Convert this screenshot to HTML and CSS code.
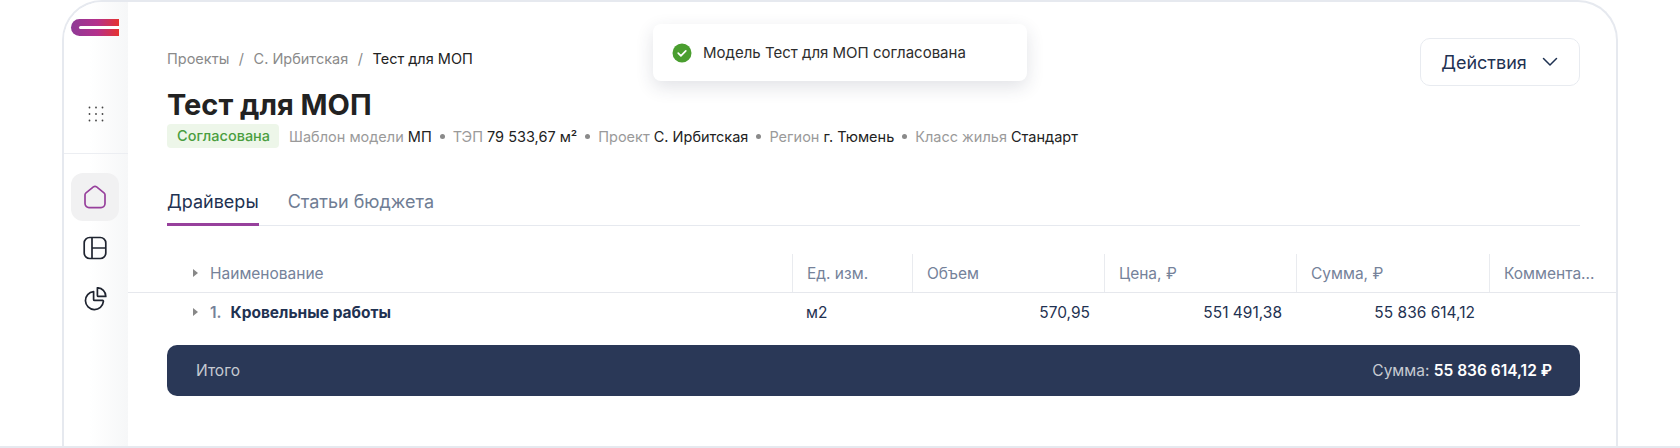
FILE: index.html
```html
<!DOCTYPE html>
<html lang="ru">
<head>
    <meta charset="UTF-8">
    <title>Тест для МОП</title>
    <link rel="stylesheet" href="styles.css">
</head>
<body>
    <div class="frame">
        <!-- Sidebar -->
        <aside class="sidebar">
            <div class="logo"></div>
            <div class="apps-box">
                <svg width="16" height="16" viewBox="0 0 16 16" fill="#444">
                    <circle cx="1.5" cy="1.5" r="0.9"/><circle cx="8" cy="1.5" r="0.9"/><circle cx="14.5" cy="1.5" r="0.9"/>
                    <circle cx="1.5" cy="8" r="0.9"/><circle cx="8" cy="8" r="0.9"/><circle cx="14.5" cy="8" r="0.9"/>
                    <circle cx="1.5" cy="14.5" r="0.9"/><circle cx="8" cy="14.5" r="0.9"/><circle cx="14.5" cy="14.5" r="0.9"/>
                </svg>
            </div>
            <nav class="side-nav">
                <div class="side-item active">
                    <svg width="24" height="24" viewBox="0 0 24 24" fill="none" stroke="#97409c" stroke-width="1.7" stroke-linejoin="round">
                        <path d="M10.4 1.9 A2.6 2.6 0 0 1 13.6 1.9 L21 7.8 A2.6 2.6 0 0 1 22 9.8 V18.6 A4 4 0 0 1 18 22.6 H6 A4 4 0 0 1 2 18.6 V9.8 A2.6 2.6 0 0 1 3 7.8 Z"/>
                    </svg>
                </div>
                <div class="side-item">
                    <svg width="24" height="24" viewBox="0 0 24 24" fill="none" stroke="#1f2430" stroke-width="1.7">
                        <rect x="1.2" y="1.5" width="21.6" height="21" rx="5.5"/>
                        <path d="M9 1.5 V22.5 M9 12 H22.8"/>
                    </svg>
                </div>
                <div class="side-item">
                    <svg width="24" height="24" viewBox="0 2 24 24" fill="none" stroke="#1f2430" stroke-width="1.7" stroke-linejoin="round">
                        <path d="M10.6 6.6 A9 9 0 1 0 20.4 16.4 A0.8 0.8 0 0 0 19.6 15.4 H11.6 A1 1 0 0 1 10.6 14.4 Z"/>
                        <path d="M14.4 2.8 A8.6 8.6 0 0 1 22.8 11.4 H15.4 A1 1 0 0 1 14.4 10.4 Z"/>
                    </svg>
                </div>
            </nav>
        </aside>

        <!-- Main -->
        <main class="main">
            <div class="head">
                <div class="head-top">
                    <div>
                        <div class="breadcrumbs">
                            <span>Проекты</span><span class="sep">/</span><span>С. Ирбитская</span><span class="sep">/</span><span class="current">Тест для МОП</span>
                        </div>
                        <h1>Тест для МОП</h1>
                    </div>
                    <button class="actions-btn">
                        Действия
                        <svg width="18" height="18" viewBox="0 0 18 18" fill="none" stroke="#1f3252" stroke-width="1.5" stroke-linecap="round" stroke-linejoin="round"><path d="M2.5 5.5 L9 12 L15.5 5.5"/></svg>
                    </button>
                </div>
                <div class="meta">
                    <span class="badge">Согласована</span>
                    <span class="meta-item">Шаблон модели <b>МП</b></span><i class="dot"></i>
                    <span class="meta-item">ТЭП <b>79 533,67 м²</b></span><i class="dot"></i>
                    <span class="meta-item">Проект <b>С. Ирбитская</b></span><i class="dot"></i>
                    <span class="meta-item">Регион <b>г. Тюмень</b></span><i class="dot"></i>
                    <span class="meta-item">Класс жилья <b>Стандарт</b></span>
                </div>
                <div class="tabs">
                    <div class="tab active">Драйверы</div>
                    <div class="tab">Статьи бюджета</div>
                </div>
            </div>

            <div class="table">
                <div class="table-row table-head">
                    <div class="cell name-cell"><span class="arrow"></span>Наименование</div>
                    <div class="cell">Ед. изм.</div>
                    <div class="cell">Объем</div>
                    <div class="cell">Цена, ₽</div>
                    <div class="cell">Сумма, ₽</div>
                    <div class="cell">Коммента...</div>
                </div>
                <div class="table-row table-body">
                    <div class="cell name-cell"><span class="arrow"></span><span class="num">1.</span><b>Кровельные работы</b></div>
                    <div class="cell">м2</div>
                    <div class="cell right">570,95</div>
                    <div class="cell right">551 491,38</div>
                    <div class="cell right">55 836 614,12</div>
                    <div class="cell"></div>
                </div>
            </div>

            <div class="total-wrap">
                <div class="total">
                    <span>Итого</span>
                    <span>Сумма: <b>55 836 614,12 ₽</b></span>
                </div>
            </div>
        </main>

        <!-- Toast -->
        <div class="toast">
            <svg width="20" height="20" viewBox="0 0 20 20"><circle cx="10" cy="10" r="9.5" fill="#4a9e2f"/><path d="M6.2 10.2 L8.9 12.8 L13.8 7.8" fill="none" stroke="#fff" stroke-width="1.7" stroke-linecap="round" stroke-linejoin="round"/></svg>
            Модель Тест для МОП согласована
        </div>
    </div>
</body>
</html>
```

FILE: styles.css
```css
html, body {
    margin: 0;
    padding: 0;
    background: #fff;
    font-family: Inter, "Noto Sans", sans-serif;
}
body {
    height: 448px;
    overflow: hidden;
    padding: 0 62px;
    box-sizing: border-box;
    border-bottom: 2px solid #e6e9ef;
}
.frame {
    position: relative;
    display: flex;
    height: 446px;
    box-sizing: border-box;
    background: #fff;
    border: 2px solid #e6e9ef;
    border-bottom: none;
    border-radius: 40px 40px 0 0;
    overflow: hidden;
}
/* Sidebar */
.sidebar {
    width: 64px;
    flex: none;
    background: linear-gradient(to right, #fff 40%, #f6f7f8 100%);
}
.logo {
    width: 48px;
    height: 17px;
    margin: 17px 0 0 7px;
    box-sizing: border-box;
    border-radius: 9px 0 0 9px;
    background: linear-gradient(to right, #8e3a96 0%, #b4308c 55%, #e6332f 100%);
    position: relative;
}
.logo::after {
    content: "";
    position: absolute;
    left: 8px;
    right: 0;
    top: 7px;
    height: 3px;
    background: #fff;
    border-radius: 2px 0 0 2px;
}
.apps-box {
    height: 118px;
    display: flex;
    align-items: flex-end;
    justify-content: center;
    border-bottom: 1px solid #eceef2;
    padding-bottom: 31px;
    box-sizing: border-box;
}
.side-nav {
    padding: 19px 7px 0 7px;
    display: flex;
    flex-direction: column;
    gap: 3px;
}
.side-item {
    width: 48px;
    height: 48px;
    flex: none;
    display: flex;
    align-items: center;
    justify-content: center;
    border-radius: 12px;
}
.side-item.active {
    background: #f1f1f2;
}
/* Main */
.main {
    flex: 1;
    min-width: 0;
}
.head {
    padding: 36px 36px 0 39px;
}
.head-top {
    display: flex;
    justify-content: space-between;
    align-items: flex-start;
}
.breadcrumbs {
    font-size: 14.5px;
    line-height: 20px;
    color: #8a8a8a;
    margin-top: 11px;
}
.breadcrumbs .sep {
    margin: 0 9.5px;
}
.breadcrumbs .current {
    color: #222;
}
h1 {
    margin: 18px 0 0 0;
    font-size: 29px;
    line-height: 36px;
    font-weight: 700;
    color: #222;
}
.actions-btn {
    width: 160px;
    height: 48px;
    background: #fff;
    border: 1px solid #e8ebf0;
    border-radius: 10px;
    display: flex;
    align-items: center;
    justify-content: center;
    gap: 14px;
    font-family: inherit;
    font-size: 18px;
    color: #1f3252;
    padding: 0;
}
.meta {
    display: flex;
    align-items: center;
    font-size: 14.5px;
    color: #9a9a9a;
    margin-top: 1px;
    height: 24px;
}
.badge {
    background: #edf6e9;
    color: #4a9e3f;
    font-weight: 500;
    height: 24px;
    line-height: 24px;
    padding: 0 9px 0 10px;
    border-radius: 4px;
    margin-right: 10px;
}
.meta-item b {
    font-weight: 400;
    color: #222;
}
.dot {
    width: 5px;
    height: 5px;
    border-radius: 50%;
    background: #8a8a8a;
    margin: 0 8px;
}
.tabs {
    display: flex;
    gap: 29px;
    margin-top: 42px;
    border-bottom: 1px solid #e6e9ef;
}
.tab {
    font-size: 18px;
    line-height: 24px;
    padding-bottom: 11px;
    margin-bottom: -1px;
    color: #6f7d94;
}
.tab.active {
    color: #1f3252;
    border-bottom: 3px solid #97409c;
    padding-bottom: 9px;
}
/* Table */
.table {
    margin-top: 28px;
    font-size: 15.5px;
}
.table-row {
    display: grid;
    grid-template-columns: 664px 120px 192px 192px 193px 1fr;
}
.table-head {
    height: 38px;
    border-bottom: 1px solid #e6e8ed;
    color: #75829a;
}
.table-head .cell {
    display: flex;
    align-items: center;
    padding: 0 14px;
    border-left: 1px solid #e9ebef;
    white-space: nowrap;
}
.table-head .name-cell {
    border-left: none;
}
.table-body {
    height: 38px;
    color: #1f3252;
    align-items: center;
}
.table-body .cell {
    padding: 0 14px;
    white-space: nowrap;
}
.table-body .cell.right {
    text-align: right;
}
.name-cell {
    display: flex;
    align-items: center;
    padding-left: 65px !important;
}
.arrow {
    width: 0;
    height: 0;
    border-left: 5px solid #888;
    border-top: 4px solid transparent;
    border-bottom: 4px solid transparent;
    margin-right: 12px;
}
.num {
    color: #75829a;
    font-weight: 600;
    margin-right: 9px;
}
.name-cell b {
    font-weight: 700;
}
.total-wrap {
    padding: 14px 36px 0 39px;
}
.total {
    height: 51px;
    background: #2a3857;
    border-radius: 10px;
    display: flex;
    align-items: center;
    justify-content: space-between;
    padding: 0 28px 0 29px;
    font-size: 15.5px;
    color: #c6cad2;
}
.total b {
    color: #fff;
    font-weight: 600;
}
/* Toast */
.toast {
    position: absolute;
    left: 589px;
    top: 22px;
    width: 374px;
    height: 57px;
    box-sizing: border-box;
    display: flex;
    align-items: center;
    gap: 11px;
    padding: 0 0 0 19px;
    background: #fff;
    border-radius: 8px;
    box-shadow: 0 6px 18px rgba(40, 50, 80, 0.14);
    font-size: 15px;
    color: #2d2d2d;
}
```
